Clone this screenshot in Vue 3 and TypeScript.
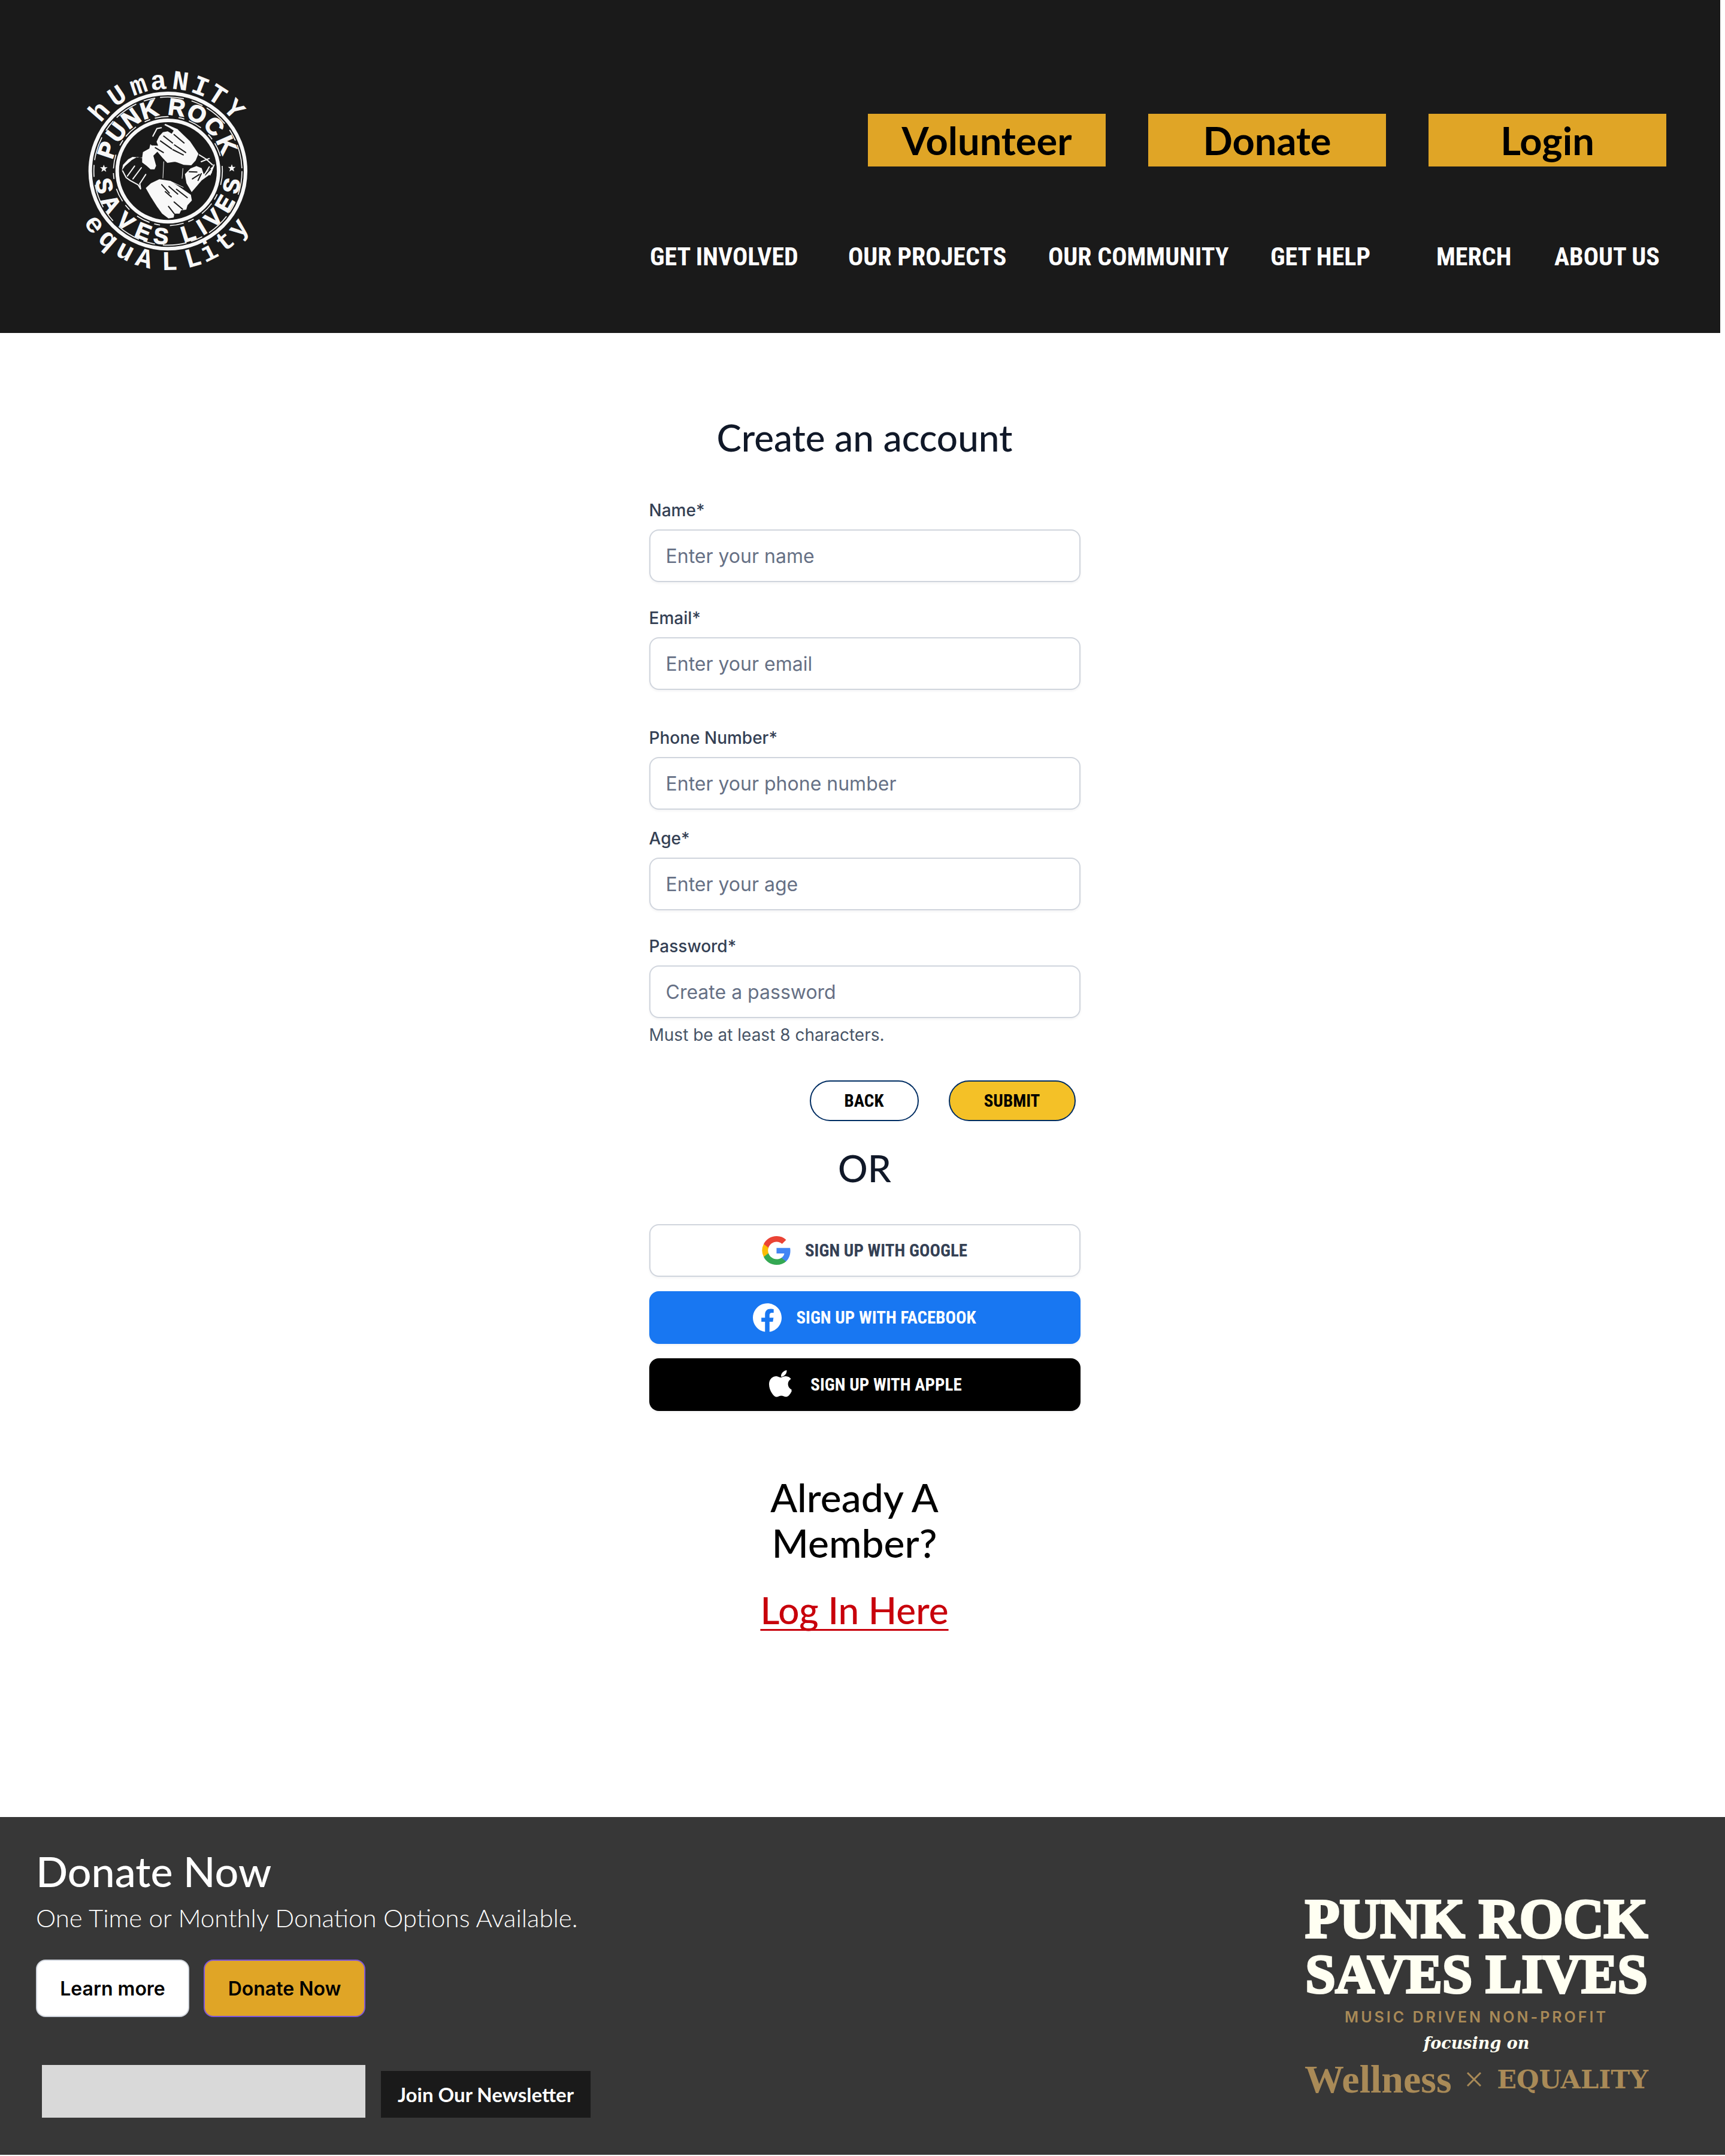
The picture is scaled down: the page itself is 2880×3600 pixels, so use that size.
<script setup lang="ts">
interface Field {
  id: string
  label: string
  type: string
  placeholder: string
  hint?: string
  space: string
}

interface RingGlyphs {
  x: string
  y: string
  rotate: string
}

const ctas = ['Volunteer', 'Donate', 'Login']
const navLinks = ['GET INVOLVED', 'OUR PROJECTS', 'OUR COMMUNITY', 'GET HELP', 'MERCH', 'ABOUT US']

const fields: Field[] = [
  { id: 'name', label: 'Name*', type: 'text', placeholder: 'Enter your name', space: 'normal' },
  { id: 'email', label: 'Email*', type: 'email', placeholder: 'Enter your email', space: 'wide' },
  { id: 'phone', label: 'Phone Number*', type: 'tel', placeholder: 'Enter your phone number', space: 'tight' },
  { id: 'age', label: 'Age*', type: 'text', placeholder: 'Enter your age', space: 'normal' },
  { id: 'password', label: 'Password*', type: 'password', placeholder: 'Create a password', hint: 'Must be at least 8 characters.', space: 'last' },
]

// Badge lettering: every glyph is centred on its own angle of the ring.
const CX = 483
const CY = 587
const sansWidths: Record<string, number> = {
  P: 0.667, U: 0.722, N: 0.722, K: 0.722, R: 0.722, O: 0.778, C: 0.722, S: 0.667,
  A: 0.722, V: 0.667, E: 0.667, L: 0.611, I: 0.278, ' ': 0.278,
}

function ring(text: string, angles: number[], radius: number, size: number, below: boolean, mono: boolean): RingGlyphs {
  const xs: number[] = []
  const ys: number[] = []
  const rs: number[] = []
  text.split('').forEach((ch, i) => {
    const a = (angles[i] * Math.PI) / 180
    const half = ((mono ? 0.6 : sansWidths[ch]) * size) / 2
    const turn = below ? 270 - angles[i] : 90 - angles[i]
    const t = ((below ? -turn : turn) * Math.PI) / 180
    const sign = below ? -1 : 1
    xs.push(Math.round(CX + radius * Math.cos(a) - half * Math.cos(t)))
    ys.push(Math.round(CY - radius * Math.sin(a) - sign * half * Math.sin(t)))
    rs.push(Math.round(turn))
  })
  return { x: xs.join(' '), y: ys.join(' '), rotate: rs.join(' ') }
}

const humanity = ring('hUmaNITY', [139, 124, 109, 96, 82, 69, 57, 43], 412, 136, false, true)
const equality = ring('equALLity', [216, 229, 242, 255, 271, 286, 297, 309, 321], 495, 136, true, true)
const punkRock = ring('PUNK ROCK', [161, 143, 125, 107, 95, 82, 63, 44, 24], 282, 118, false, false)
const savesLives = ring('SAVES LIVES', [193, 210, 230, 248, 264, 276, 288, 301, 314, 330, 347], 366, 112, true, false)
</script>

<template>
  <div class="page">
    <header class="site-header">
      <a class="badge" href="#" aria-label="Punk Rock Saves Lives">
        <svg viewBox="80 90 810 1002" width="270" height="334">
          <g fill="none" stroke="#f8f8f8">
            <circle :cx="CX" :cy="CY" r="389" stroke-width="18" />
            <circle :cx="CX" :cy="CY" r="371" stroke-width="5" stroke-dasharray="120 40 60 24" />
            <circle :cx="CX" :cy="CY" r="254" stroke-width="18" />
            <circle :cx="CX" :cy="CY" r="273" stroke-width="5" stroke-dasharray="70 50 30 24" />
          </g>
          <g class="badge-type">
            <text :x="humanity.x" :y="humanity.y" :rotate="humanity.rotate" font-size="136">hUmaNITY</text>
            <text :x="equality.x" :y="equality.y" :rotate="equality.rotate" font-size="136">equALLity</text>
          </g>
          <g class="badge-name">
            <text :x="punkRock.x" :y="punkRock.y" :rotate="punkRock.rotate" font-size="118">PUNK ROCK</text>
            <text :x="savesLives.x" :y="savesLives.y" :rotate="savesLives.rotate" font-size="112">SAVES LIVES</text>
          </g>
          <g fill="#f8f8f8">
            <path d="M162 555l5 13h14l-11 9 4 14-12-8-12 8 4-14-11-9h14z" />
            <path d="M803 553l5 13h14l-11 9 4 14-12-8-12 8 4-14-11-9h14z" />
            <path d="M440 412l18-20 24-4 20 12 10-16-24-16-28-14 40 12 42 22 52 50 42 62-14 34-22 24-38-2-42-16-40 6-26-28-22-26-34-34 36 2-8-20 8-16z" />
            <path d="M395 452l37 36-22 22 14 50-8 18-20 0-20-18-22-16 0-22-24-6-28 16-34 30-16 22 6-28 26-28 22-12 48 4 4-28 32-18z" />
            <path d="M372 672l26-24 42-20 56 8 50 34 52 36 5 28-22 24-6 22-26 4-8 16-26 0-3 20-26 4-32-24-26-36-32-50z" />
            <path d="M568 602l28-28 30-12 26 10 10 30 36-30 14-12-10 38-50 36-50 58-26-44z" />
          </g>
          <g fill="none" stroke="#1a1a1a" stroke-width="6" stroke-linecap="round">
            <path d="M462 412l44 34M446 436l56 40M514 404l50 42M516 456l56 38M508 480l52 26M420 470l40 24M452 655l38 42M488 664l44 38M526 678l54 42M470 690l30 26M514 742l42 36M486 764l28 36M590 590l38 2M606 626l34-22M650 600l-16 34M670 606l26-28" />
          </g>
          <g fill="none" stroke="#f8f8f8" stroke-width="6" stroke-linecap="round">
            <path d="M256 586l18 34 20 14 40 22 12 20M316 562l-36 50M350 570l-42 56M372 604l-30 46 4 24M408 412l20-38 22-4M470 354l60 26 66 74M640 506l36 22 30 28M650 540l40-16M690 566l-30 50M714 556l-20 50" />
            <path stroke-width="3" d="M462 540l-4 82M470 534l92 10M558 574l-4 50M500 640l60 28" />
          </g>
        </svg>
      </a>
      <div class="header-menu">
        <div class="cta-row">
          <button v-for="cta in ctas" :key="cta" type="button" class="cta">{{ cta }}</button>
        </div>
        <nav class="main-nav">
          <a v-for="link in navLinks" :key="link" href="#">{{ link }}</a>
        </nav>
      </div>
    </header>

    <main class="content">
      <h1>Create an account</h1>
      <form class="signup" @submit.prevent>
        <div v-for="f in fields" :key="f.id" class="field" :class="f.space">
          <label :for="f.id">{{ f.label }}</label>
          <input :id="f.id" :type="f.type" :placeholder="f.placeholder" />
          <p v-if="f.hint" class="hint">{{ f.hint }}</p>
        </div>
        <div class="actions">
          <button type="button" class="pill">BACK</button>
          <button type="submit" class="pill primary">SUBMIT</button>
        </div>
      </form>

      <h2 class="or">OR</h2>

      <div class="socials">
        <button type="button" class="social google">
          <svg width="48" height="48" viewBox="0 0 48 48" aria-hidden="true">
            <path fill="#4285F4" d="M47.532 24.552c0-1.636-.132-3.272-.412-4.872H24.48v9.22h12.964c-.536 2.98-2.264 5.62-4.792 7.292v5.984h7.736c4.54-4.18 7.144-10.352 7.144-17.624z" />
            <path fill="#34A853" d="M24.48 48c6.472 0 11.932-2.128 15.908-5.82l-7.736-5.984c-2.152 1.464-4.928 2.292-8.164 2.292-6.26 0-11.568-4.224-13.472-9.9H3.032v6.168C7.1 42.852 15.388 48 24.48 48z" />
            <path fill="#FBBC04" d="M11.008 28.588a14.36 14.36 0 0 1 0-9.188v-6.168H3.032a23.98 23.98 0 0 0 0 21.524z" />
            <path fill="#EA4335" d="M24.48 9.5a13.04 13.04 0 0 1 9.2 3.596l6.848-6.848A23.04 23.04 0 0 0 24.48 0C15.388 0 7.1 5.148 3.032 13.232L11.008 19.4C12.9 13.716 18.22 9.5 24.48 9.5z" />
          </svg>
          <span>SIGN UP WITH GOOGLE</span>
        </button>
        <button type="button" class="social facebook">
          <svg width="48" height="48" viewBox="0 0 24 24" aria-hidden="true">
            <path fill="#fff" d="M24 12.07C24 5.44 18.63.07 12 .07S0 5.44 0 12.07c0 5.99 4.39 10.95 10.13 11.85v-8.38H7.08v-3.47h3.05V9.43c0-3.01 1.79-4.67 4.53-4.67 1.31 0 2.69.23 2.69.23v2.96h-1.52c-1.49 0-1.95.93-1.95 1.87v2.25h3.32l-.53 3.47h-2.79v8.38C19.61 23.02 24 18.06 24 12.07z" />
          </svg>
          <span>SIGN UP WITH FACEBOOK</span>
        </button>
        <button type="button" class="social apple">
          <svg width="48" height="48" viewBox="0 0 48 48" aria-hidden="true">
            <path fill="#fff" d="M41.1 34.3c-.7 1.6-1.5 3-2.4 4.4-1.3 1.8-2.3 3.1-3.1 3.8-1.3 1.2-2.6 1.8-4.1 1.800-1.1 0-2.300-.3-3.800-.9-1.500-.6-2.900-.9-4.200-.9-1.300 0-2.800.3-4.300.9-1.600.6-2.800 1-3.800 1-1.400.1-2.800-.6-4.200-1.900-.9-.8-2-2.100-3.300-4-1.400-2-2.600-4.300-3.500-6.900C3.500 28.800 3 26.100 3 23.500c0-3 .6-5.600 1.900-7.700 1-1.700 2.400-3.100 4.100-4.100s3.500-1.500 5.500-1.600c1.100 0 2.500.3 4.300 1s2.900 1 3.400 1c.4 0 1.700-.4 3.800-1.200 2-.7 3.700-1 5.100-.9 3.800.3 6.600 1.800 8.500 4.500-3.400 2-5 4.900-5 8.600 0 2.900 1.100 5.300 3.100 7.200.9.900 2 1.600 3.100 2.100-.2.700-.5 1.300-.7 1.900zM32.500.9c0 2.300-.8 4.400-2.500 6.400-2 2.300-4.400 3.700-7 3.500 0-.3-.1-.6-.1-.9 0-2.200 1-4.500 2.700-6.400.9-1 2-1.800 3.300-2.500 1.300-.6 2.500-1 3.600-1 0 .3 0 .6 0 .9z" />
          </svg>
          <span>SIGN UP WITH APPLE</span>
        </button>
      </div>

      <section class="member">
        <h2>Already A<br />Member?</h2>
        <a href="#">Log In Here</a>
      </section>
    </main>

    <footer class="site-footer">
      <div class="giving">
        <h2>Donate Now</h2>
        <p>One Time or Monthly Donation Options Available.</p>
        <div class="giving-actions">
          <button type="button" class="soft">Learn more</button>
          <button type="button" class="soft gold">Donate Now</button>
        </div>
        <form class="newsletter" @submit.prevent>
          <input type="email" aria-label="Email address" />
          <button type="submit">Join Our Newsletter</button>
        </form>
      </div>
      <div class="wordmark">
        <p class="wm-top">PUNK ROCK</p>
        <p class="wm-bottom">SAVES LIVES</p>
        <p class="wm-tag">MUSIC DRIVEN NON-PROFIT</p>
        <p class="wm-focus">focusing on</p>
        <p class="wm-values">
          <span class="wellness">Wellness</span>
          <svg width="24" height="24" viewBox="0 0 24 24" aria-hidden="true"><path d="M1 1l22 22M23 1L1 23" stroke="#a98a57" stroke-width="3" /></svg>
          <span class="equality">EQUALITY</span>
        </p>
      </div>
    </footer>
  </div>
</template>

<style>
body {
  margin: 0;
  background: #fff;
}
</style>

<style scoped>
.page {
  --narrow: "Liberation Sans Narrow", "Roboto Condensed", "Open Sans Condensed", "DejaVu Sans Condensed", sans-serif;
  font-family: Lato, sans-serif;
  color: #101828;
}

h1, h2, p {
  margin: 0;
  font-weight: 500;
}

button, input {
  box-sizing: border-box;
  margin: 0;
  font: inherit;
}

button {
  padding: 0;
  border: 0;
  cursor: pointer;
}

.site-header {
  box-sizing: border-box;
  display: flex;
  justify-content: space-between;
  align-items: flex-start;
  height: 556px;
  margin-right: 8px;
  padding: 120px 90px 0 146px;
  background: #1a1a1a;
}

.badge svg {
  display: block;
  overflow: visible;
}

.badge-type text {
  fill: #f8f8f8;
  font-family: "Liberation Mono", monospace;
  font-weight: 700;
}

.badge-name text {
  fill: #f8f8f8;
  stroke: #f8f8f8;
  stroke-width: 4px;
  font-family: "Liberation Sans", sans-serif;
  font-weight: 700;
}

.header-menu {
  display: flex;
  flex-direction: column;
  padding-top: 70px;
}

.cta-row {
  display: flex;
  justify-content: flex-end;
  gap: 71px;
}

.cta {
  width: 397px;
  height: 88px;
  background: #e0a526;
  color: #000;
  font-size: 65px;
  font-weight: 700;
  line-height: 88px;
}

.main-nav {
  display: grid;
  grid-template-columns: 331px 334px 371px 277px 197px 187px;
  margin-top: 121px;
}

.main-nav a {
  color: #fff;
  font-family: var(--narrow);
  font-size: 42px;
  font-weight: 700;
  line-height: 60px;
  text-decoration: none;
  white-space: nowrap;
}

.content {
  display: flex;
  flex-direction: column;
  align-items: center;
  padding-top: 130px;
  padding-bottom: 306px;
  padding-left: 7px;
}

h1, .or {
  font-size: 62px;
  line-height: 88px;
}

.signup {
  width: 720px;
  margin-top: 58px;
}

.field {
  display: flex;
  flex-direction: column;
  font-family: Inter, sans-serif;
}

.field.normal {
  margin-bottom: 40px;
}

.field.wide {
  margin-bottom: 60px;
}

.field.tight {
  margin-bottom: 28px;
}

.field label {
  margin-bottom: 12px;
  color: #344054;
  font-size: 28px;
  font-weight: 500;
  line-height: 40px;
}

.field input {
  height: 88px;
  padding: 0 26px;
  border: 2px solid #d0d5dd;
  border-radius: 16px;
  background: #fff;
  box-shadow: 0 2px 4px rgba(16, 24, 40, 0.05);
  color: #101828;
  font-size: 32px;
}

.field input::placeholder {
  color: #667085;
  opacity: 1;
}

.hint {
  margin-top: 8px;
  color: #475467;
  font-size: 28px;
  font-weight: 400;
  line-height: 40px;
}

.actions {
  display: flex;
  justify-content: flex-end;
  gap: 50px;
  margin-top: 56px;
  padding-right: 8px;
}

.pill {
  width: 182px;
  height: 68px;
  border: 2px solid #002d62;
  border-radius: 34px;
  background: #fff;
  color: #000;
  font-family: var(--narrow);
  font-size: 29px;
  font-weight: 700;
}

.pill.primary {
  width: 212px;
  background: #f4c127;
}

.or {
  margin-top: 34px;
}

.socials {
  display: flex;
  flex-direction: column;
  gap: 24px;
  width: 720px;
  margin-top: 50px;
}

.social {
  display: flex;
  align-items: center;
  justify-content: center;
  gap: 24px;
  height: 88px;
  border-radius: 16px;
  box-shadow: 0 2px 4px rgba(16, 24, 40, 0.05);
  color: #fff;
  font-family: var(--narrow);
  font-size: 29px;
  font-weight: 700;
}

.google {
  border: 2px solid #d0d5dd;
  background: #fff;
  color: #344054;
}

.facebook {
  background: #1877f2;
}

.apple {
  background: #000;
}

.member {
  display: flex;
  flex-direction: column;
  align-items: center;
  margin-top: 106px;
  padding-right: 34px;
  color: #000;
  text-align: center;
}

.member h2 {
  font-size: 66px;
  line-height: 76px;
}

.member a {
  margin-top: 34px;
  color: #c8000b;
  font-size: 62px;
  font-weight: 500;
  line-height: 80px;
  text-decoration-thickness: 3px;
  text-decoration-skip-ink: none;
  text-underline-offset: 8px;
}

.site-footer {
  display: flex;
  justify-content: space-between;
  align-items: flex-start;
  padding: 52px 128px 62px 60px;
  background: #373737;
  color: #fff;
}

.giving h2 {
  font-size: 70px;
  line-height: 76px;
}

.giving p {
  margin-top: 16px;
  font-size: 42px;
  font-weight: 300;
  line-height: 48px;
}

.giving-actions {
  display: flex;
  gap: 24px;
  margin-top: 46px;
}

.soft {
  width: 256px;
  height: 96px;
  border: 2px solid #d0d5dd;
  border-radius: 16px;
  background: #fff;
  color: #000;
  font-family: Inter, sans-serif;
  font-size: 32px;
  font-weight: 600;
}

.soft.gold {
  width: 270px;
  border-color: #7f56d9;
  background: #e0a526;
}

.newsletter {
  display: flex;
  align-items: flex-end;
  gap: 26px;
  margin-top: 80px;
  padding-left: 10px;
}

.newsletter input {
  width: 540px;
  height: 88px;
  padding: 0 24px;
  border: 0;
  background: #d9d9d9;
  font-size: 32px;
}

.newsletter button {
  width: 350px;
  height: 78px;
  background: #1a1a1a;
  color: #fff;
  font-size: 33px;
  font-weight: 700;
}

.wordmark {
  display: flex;
  flex-direction: column;
  align-items: center;
  width: 574px;
  padding-top: 70px;
  color: #fffff2;
  white-space: nowrap;
}

.wm-top, .wm-bottom {
  font-family: "Liberation Serif", serif;
  font-weight: 700;
  line-height: 94px;
  -webkit-text-stroke: 4px #fffff2;
}

.wm-top {
  font-size: 94px;
}

.wm-bottom {
  font-size: 90px;
}

.wm-tag {
  margin-top: 6px;
  color: #a98a57;
  font-family: Inter, sans-serif;
  font-size: 25px;
  font-weight: 600;
  letter-spacing: 4px;
  line-height: 36px;
}

.wm-focus {
  margin-top: 8px;
  font-family: "DejaVu Serif", serif;
  font-size: 27px;
  font-style: italic;
  font-weight: 700;
  line-height: 36px;
}

.wm-values {
  display: flex;
  align-items: center;
  justify-content: space-between;
  align-self: stretch;
  margin-top: 12px;
  color: #a98a57;
  font-weight: 700;
  line-height: 60px;
}

.wellness {
  font-family: "Liberation Serif", serif;
  font-size: 66px;
}

.equality {
  font-family: "DejaVu Serif", serif;
  font-size: 43px;
}
</style>
